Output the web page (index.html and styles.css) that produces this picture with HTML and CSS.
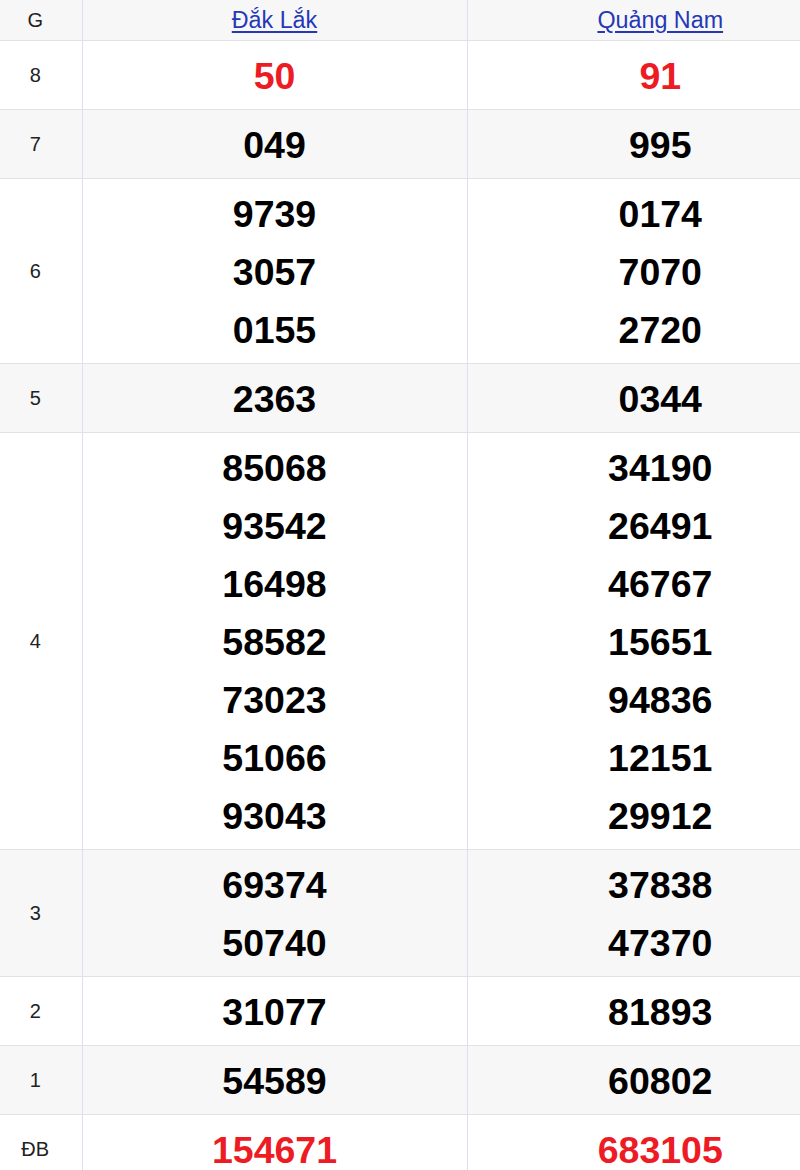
FILE: index.html
```html
<!DOCTYPE html>
<html lang="vi">
<head>
<meta charset="utf-8">
<link rel="stylesheet" href="styles.css">
</head>
<body>
<table class="kq">
  <colgroup><col class="c-g"><col class="c-p"><col class="c-last"></colgroup>
  <thead>
    <tr class="hd"><th class="lbl">G</th><th><a href="#">Đắk Lắk</a></th><th class="last"><a href="#">Quảng Nam</a></th></tr>
  </thead>
  <tbody>
    <tr><td class="lbl">8</td><td class="num red"><div>50</div></td><td class="num red last"><div>91</div></td></tr>
    <tr class="alt"><td class="lbl">7</td><td class="num"><div>049</div></td><td class="num last"><div>995</div></td></tr>
    <tr><td class="lbl">6</td><td class="num"><div>9739</div><div>3057</div><div>0155</div></td><td class="num last"><div>0174</div><div>7070</div><div>2720</div></td></tr>
    <tr class="alt"><td class="lbl">5</td><td class="num"><div>2363</div></td><td class="num last"><div>0344</div></td></tr>
    <tr><td class="lbl">4</td><td class="num"><div>85068</div><div>93542</div><div>16498</div><div>58582</div><div>73023</div><div>51066</div><div>93043</div></td><td class="num last"><div>34190</div><div>26491</div><div>46767</div><div>15651</div><div>94836</div><div>12151</div><div>29912</div></td></tr>
    <tr class="alt"><td class="lbl">3</td><td class="num"><div>69374</div><div>50740</div></td><td class="num last"><div>37838</div><div>47370</div></td></tr>
    <tr><td class="lbl">2</td><td class="num"><div>31077</div></td><td class="num last"><div>81893</div></td></tr>
    <tr class="alt"><td class="lbl">1</td><td class="num"><div>54589</div></td><td class="num last"><div>60802</div></td></tr>
    <tr><td class="lbl">ĐB</td><td class="num red"><div>154671</div></td><td class="num red last"><div>683105</div></td></tr>
  </tbody>
</table>
</body>
</html>
```
FILE: styles.css
```css
html, body {
  margin: 0;
  padding: 0;
  background: #fff;
}
body {
  font-family: "Liberation Sans", Arial, sans-serif;
  color: #222;
  width: 800px;
  overflow: hidden;
}
.kq {
  border-collapse: collapse;
  table-layout: fixed;
  width: 800px;
}
.c-g { width: 82px; }
.c-p { width: 385px; }
.c-last { width: 333px; }
.kq th, .kq td {
  border-bottom: 1px solid #e2e2e6;
  border-right: 1px solid #dfe1ea;
  text-align: center;
  vertical-align: middle;
  padding: 0;
}
.kq .last {
  border-right: none;
  padding-left: 53px;
}
.kq .lbl {
  font-size: 20px;
  font-weight: normal;
  color: #222;
  padding-right: 11px;
}
.hd th {
  height: 40px;
  background: #f7f7f7;
  font-weight: normal;
}
.hd a {
  color: #2438b8;
  font-size: 23.3px;
  text-decoration: underline;
  text-underline-offset: 3px;
}
.alt td { background: #f7f7f7; }
.num {
  padding-top: 6px !important;
  padding-bottom: 4px !important;
  font-size: 37.5px;
  font-weight: bold;
  color: #000;
}
.num div {
  line-height: 58px;
  height: 58px;
}
.num.red { color: #ed1c24; }
```
